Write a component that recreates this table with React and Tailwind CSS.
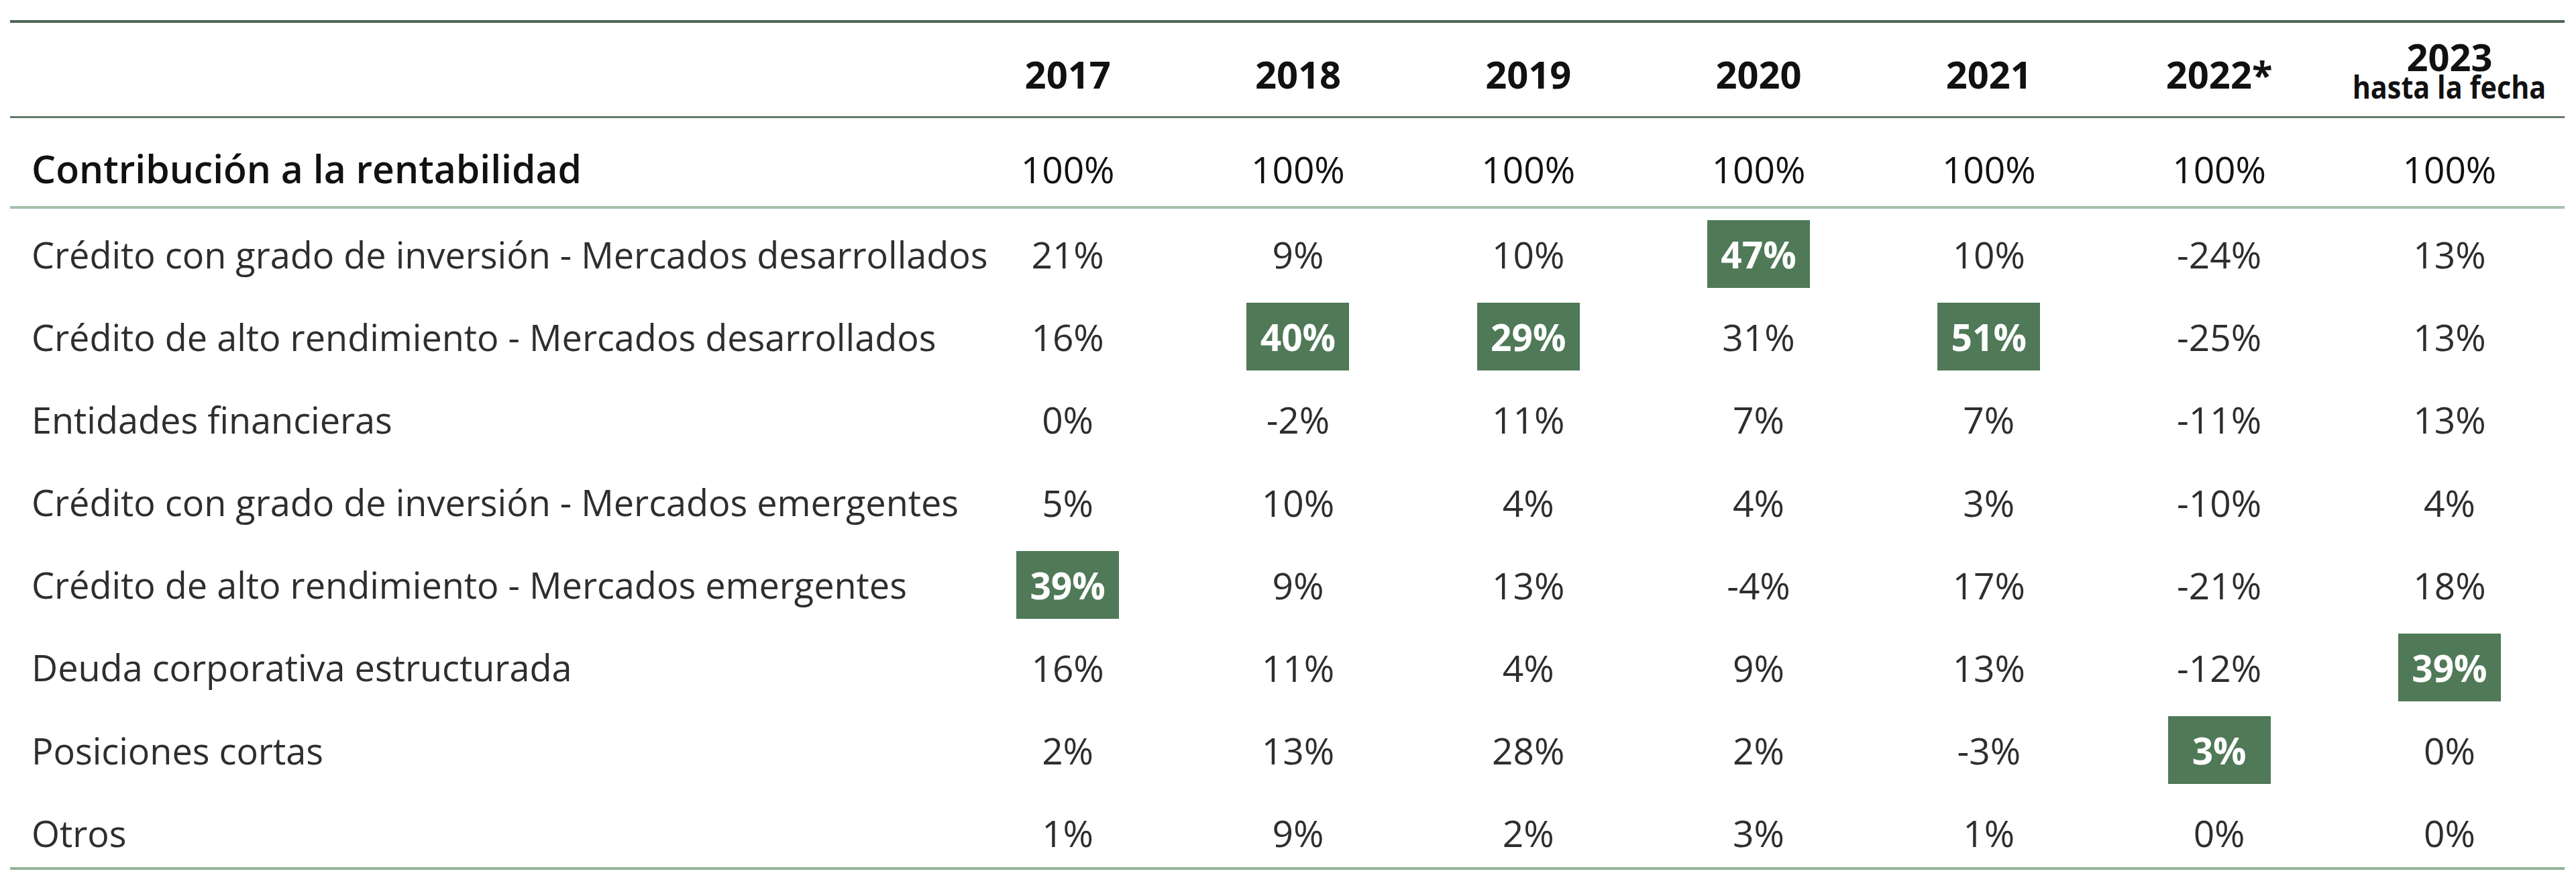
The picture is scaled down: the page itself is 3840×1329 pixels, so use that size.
import React from "react";

const years = ["2017", "2018", "2019", "2020", "2021", "2022*"];

const rows = [
  { label: "Crédito con grado de inversión - Mercados desarrollados", values: ["21%", "9%", "10%", "47%", "10%", "-24%", "13%"], hl: [3] },
  { label: "Crédito de alto rendimiento - Mercados desarrollados", values: ["16%", "40%", "29%", "31%", "51%", "-25%", "13%"], hl: [1, 2, 4] },
  { label: "Entidades financieras", values: ["0%", "-2%", "11%", "7%", "7%", "-11%", "13%"], hl: [] },
  { label: "Crédito con grado de inversión - Mercados emergentes", values: ["5%", "10%", "4%", "4%", "3%", "-10%", "4%"], hl: [] },
  { label: "Crédito de alto rendimiento - Mercados emergentes", values: ["39%", "9%", "13%", "-4%", "17%", "-21%", "18%"], hl: [0] },
  { label: "Deuda corporativa estructurada", values: ["16%", "11%", "4%", "9%", "13%", "-12%", "39%"], hl: [6] },
  { label: "Posiciones cortas", values: ["2%", "13%", "28%", "2%", "-3%", "3%", "0%"], hl: [5] },
  { label: "Otros", values: ["1%", "9%", "2%", "3%", "1%", "0%", "0%"], hl: [] },
];

const gridCols = "grid grid-cols-[1405px_repeat(7,343.3px)]";

const App = () => {
  return (
    <div className="w-[3840px] h-[1329px] bg-white pt-[30px] pl-[15px] font-['Open_Sans',sans-serif]">
      <div className="w-[3808px] border-t-4 border-[#4d6350]">
        {/* Header */}
        <div className={`${gridCols} h-[142px] text-[#111] border-b-[3px] border-[#647a67]`}>
          <div />
          {years.map((y) => (
            <div key={y} className="flex items-center justify-center pt-[12px] text-[56px] font-bold leading-none">
              {y}
            </div>
          ))}
          <div className="flex flex-col items-center justify-center">
            <span className="text-[56px] font-bold leading-[46px]">2023</span>
            <span className="mt-[5px] text-[47px] font-bold leading-[34px] whitespace-nowrap scale-x-[0.88]">
              hasta la fecha
            </span>
          </div>
        </div>

        {/* Total row */}
        <div className={`${gridCols} h-[135px] text-[#111] border-b-4 border-[#a6c0a8]`}>
          <div className="flex items-center pl-[32px] pt-[20px] text-[57px] font-semibold leading-none whitespace-nowrap">
            Contribución a la rentabilidad
          </div>
          {Array.from({ length: 7 }).map((_, i) => (
            <div key={i} className="flex items-center justify-center pt-[20px] text-[55px] font-medium leading-none">
              100%
            </div>
          ))}
        </div>

        {/* Data rows */}
        {rows.map((row, r) => (
          <div
            key={row.label}
            className={`${gridCols} ${r === rows.length - 1 ? "h-[119px]" : "h-[123.2px]"} text-[#2e2e2e]`}
          >
            <div className="pl-[32px] pt-[17px]">
              <div className="h-[101px] flex items-center text-[54px] leading-none whitespace-nowrap">
                {row.label}
              </div>
            </div>
            {row.values.map((v, i) => (
              <div key={i} className="flex justify-center pt-[17px]">
                {row.hl.includes(i) ? (
                  <div className="w-[153px] h-[101px] bg-[#4f7957] flex items-center justify-center text-white text-[55px] font-bold leading-none">
                    {v}
                  </div>
                ) : (
                  <div className="w-[153px] h-[101px] flex items-center justify-center text-[55px] leading-none">
                    {v}
                  </div>
                )}
              </div>
            ))}
          </div>
        ))}

        <div className="h-[4px] bg-[#94b398]" />
      </div>
    </div>
  );
};

export default App;
